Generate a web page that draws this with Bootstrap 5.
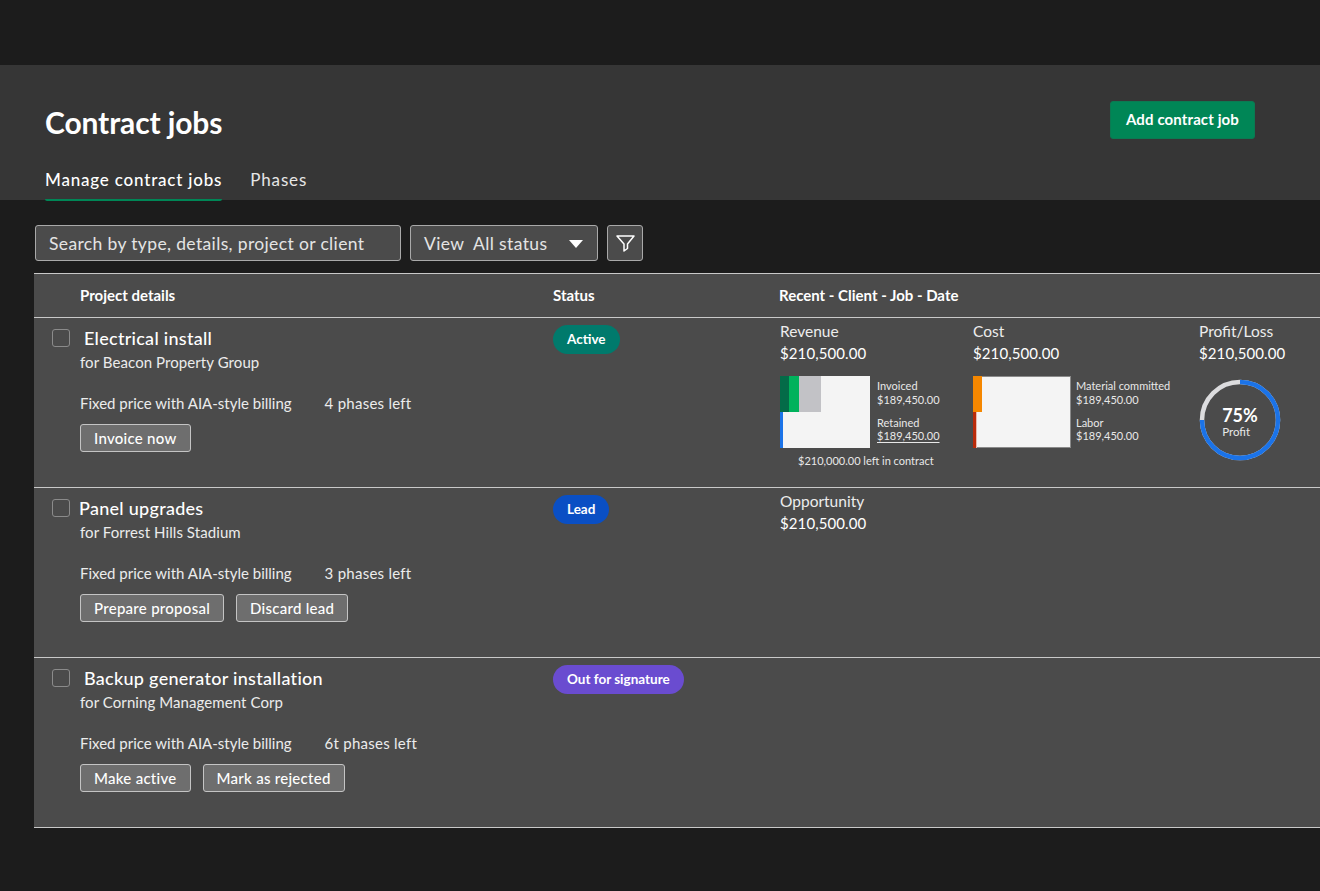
<!DOCTYPE html>
<html lang="en">
<head>
<meta charset="utf-8">
<title>Contract jobs</title>
<link href="https://cdn.jsdelivr.net/npm/bootstrap@5.3.0/dist/css/bootstrap.min.css" rel="stylesheet">
<style>
html,body{height:100%}
body{background:#1c1c1c;color:#fff;font-family:Lato,"Liberation Sans",sans-serif;overflow:hidden;font-size:15px}
.topgap{height:65px}
.pagehead{background:#363636;height:135px;padding:36px 65px 0 45px}
.pagetitle{font-size:30px;font-weight:700;line-height:42px;margin:0;letter-spacing:-.12px}
.addbtn{background:#008656;border:1px solid #0b7a52;color:#fff;font-size:15px;font-weight:700;width:145px;height:38px;padding:0 0 2px;border-radius:3px;letter-spacing:.12px}
.tabbar{margin-top:25px;gap:28px;font-size:17px;line-height:24px}
.tabitem{height:33px;color:#e6e6e6;letter-spacing:.85px}
.tabitem.on{color:#fff;font-weight:500;border-bottom:2px solid #008656;border-radius:2px;letter-spacing:.8px}
.toolbar{padding:25px 0 12px 35px;gap:9px;height:73px}
.fieldbox{height:36px;background:#4b4b4b;border:1px solid #a9a9a9;border-radius:3px;color:#e4e4e4;font-size:17.5px;padding:1px 13px 0;line-height:34px;letter-spacing:.36px}
.searchbox{width:366px}
.viewbox{width:188px}
.caretmark{width:0;height:0;border-left:7.5px solid transparent;border-right:7.5px solid transparent;border-top:8px solid #fff;margin-right:1px}
.filterbox{width:36px;padding:0}
.jobtable{margin-left:34px;background:#4b4b4b;border-top:1px solid #c9c9c9}
.headrow{height:44px;border-bottom:1px solid #c9c9c9;font-size:15px;font-weight:700;line-height:43px}
.cellmain{width:519px;flex:none}
.cellstatus{width:226px;flex:none}
.headrow .cellmain{padding-left:46px}
.jobrow{height:170px;border-bottom:1px solid #c9c9c9}
.jobrow .cellmain{padding:10px 0 0 18px}
.tickbox{width:18px;height:18px;border:1.5px solid #8b8b8b;border-radius:3px;flex:none;margin-right:14px}
.tickbox.narrow{margin-right:9px}
.jobname{font-size:18px;font-weight:500;line-height:20px;letter-spacing:.28px}
.jobinfo{padding-left:28px;color:#ececec}
.clientline{line-height:20px;margin-top:4px;letter-spacing:.08px}
.termline{line-height:20px;margin-top:20.5px;gap:33px}
.termline span+span{letter-spacing:.25px}
.actions{margin-top:11.5px;gap:12px}
.rowbtn{background:#6e6e6e;border:1px solid #c4c4c4;border-radius:3px;color:#fff;font-size:15px;font-weight:500;height:28px;line-height:26px;padding:0 13px;letter-spacing:.27px}
.statuspill{display:inline-block;margin-top:7px;height:29px;line-height:28px;padding:0 14px;border-radius:15px;font-size:13.5px;font-weight:700;color:#fff}
.pillactive{background:#007a6c}
.pilllead{background:#0a4fc4}
.pillsign{background:#6a4cd0}
.recentcell{padding:3px 0 0 1px}
.metriccol{flex:none}
.metricrev{width:193px}
.metriccost{width:226px}
.metrichead{line-height:20px;color:#ededed;font-size:15.5px}
.metricval{line-height:22px;margin-top:1px;font-size:15px;letter-spacing:.1px}
.chartline{margin-top:12px}
.stackbox{width:90px;height:72px;background:#f4f4f4;flex:none}
.stackbox.boxed{width:98px;box-shadow:inset 0 0 0 1px #8a8a8a}
.stackhalf{height:36px}
.stackhalf span{display:block;height:100%}
.seg-dark{background:#046b48;width:9px}
.seg-green{background:#00b25c;width:10px}
.seg-gray{background:#c2c2c6;width:22px}
.seg-blue{background:#1b73e8;width:3px}
.seg-orange{background:#f58700;width:9px}
.seg-red{background:#b92b0a;width:3px;box-shadow:1px 0 0 #eab9ad}
.legendcol{padding:3px 0 0 7px;font-size:11px;line-height:13.5px;color:#e8e8e8}
.stackbox.boxed+.legendcol{padding-left:5px}
.legendcol div+div{margin-top:9.5px}
.legendcol u{text-underline-offset:2px}
.leftnote{font-size:11px;line-height:13px;margin:6px 0 0 18px;color:#e8e8e8}
.ringbox{width:82px;height:82px;margin:15px 0 0 0}
.ringtext{inset:0;padding-top:3px}
.ringpct{font-size:18px;font-weight:700;line-height:20px}
.ringlab{font-size:11.5px;line-height:13px;color:#e8e8e8}
</style>
</head>
<body>
<div class="topgap"></div>
<header class="pagehead">
  <div class="d-flex justify-content-between align-items-start">
    <h1 class="pagetitle">Contract jobs</h1>
    <button class="btn addbtn" type="button">Add contract job</button>
  </div>
  <div class="d-flex tabbar">
    <div class="tabitem on">Manage contract jobs</div>
    <div class="tabitem">Phases</div>
  </div>
</header>
<div class="d-flex toolbar">
  <div class="fieldbox searchbox">Search by type, details, project or client</div>
  <div class="fieldbox viewbox d-flex align-items-center justify-content-between"><span>View&nbsp; All status</span><span class="caretmark"></span></div>
  <div class="fieldbox filterbox d-flex align-items-center justify-content-center">
    <svg width="19" height="17" viewBox="0 0 19 17" fill="none" stroke="#fff" stroke-width="1.5" stroke-linejoin="round"><path d="M1 1h17l-6.5 8v4.5L8 16V9z"/></svg>
  </div>
</div>
<section class="jobtable">
  <div class="d-flex headrow">
    <div class="cellmain">Project details</div>
    <div class="cellstatus">Status</div>
    <div class="flex-grow-1">Recent - Client - Job - Date</div>
  </div>

  <div class="d-flex jobrow">
    <div class="cellmain">
      <div class="d-flex align-items-center"><span class="tickbox"></span><span class="jobname">Electrical install</span></div>
      <div class="jobinfo">
        <div class="clientline">for Beacon Property Group</div>
        <div class="d-flex termline"><span>Fixed price with AIA-style billing</span><span>4 phases left</span></div>
        <div class="d-flex actions"><span class="rowbtn">Invoice now</span></div>
      </div>
    </div>
    <div class="cellstatus"><span class="statuspill pillactive">Active</span></div>
    <div class="flex-grow-1 d-flex recentcell">
      <div class="metriccol metricrev">
        <div class="metrichead">Revenue</div>
        <div class="metricval">$210,500.00</div>
        <div class="d-flex chartline">
          <div class="stackbox">
            <div class="d-flex stackhalf"><span class="seg-dark"></span><span class="seg-green"></span><span class="seg-gray"></span></div>
            <div class="d-flex stackhalf"><span class="seg-blue"></span></div>
          </div>
          <div class="legendcol"><div>Invoiced<br>$189,450.00</div><div>Retained<br><u>$189,450.00</u></div></div>
        </div>
        <div class="leftnote">$210,000.00 left in contract</div>
      </div>
      <div class="metriccol metriccost">
        <div class="metrichead">Cost</div>
        <div class="metricval">$210,500.00</div>
        <div class="d-flex chartline">
          <div class="stackbox boxed">
            <div class="d-flex stackhalf"><span class="seg-orange"></span></div>
            <div class="d-flex stackhalf"><span class="seg-red"></span></div>
          </div>
          <div class="legendcol"><div>Material committed<br>$189,450.00</div><div>Labor<br>$189,450.00</div></div>
        </div>
      </div>
      <div class="metriccol">
        <div class="metrichead">Profit/Loss</div>
        <div class="metricval">$210,500.00</div>
        <div class="position-relative ringbox">
          <svg width="82" height="82" viewBox="0 0 82 82" fill="none">
            <circle cx="41" cy="41" r="38" stroke="#dcdcde" stroke-width="4.5"/>
            <circle cx="41" cy="41" r="38" stroke="#1b73e8" stroke-width="4.5" pathLength="100" stroke-dasharray="75 25" transform="rotate(-90 41 41)"/>
          </svg>
          <div class="position-absolute ringtext d-flex align-items-center justify-content-center">
            <div class="d-flex flex-column align-items-start"><span class="ringpct">75%</span><span class="ringlab">Profit</span></div>
          </div>
        </div>
      </div>
    </div>
  </div>

  <div class="d-flex jobrow">
    <div class="cellmain">
      <div class="d-flex align-items-center"><span class="tickbox narrow"></span><span class="jobname">Panel upgrades</span></div>
      <div class="jobinfo">
        <div class="clientline">for Forrest Hills Stadium</div>
        <div class="d-flex termline"><span>Fixed price with AIA-style billing</span><span>3 phases left</span></div>
        <div class="d-flex actions"><span class="rowbtn">Prepare proposal</span><span class="rowbtn">Discard lead</span></div>
      </div>
    </div>
    <div class="cellstatus"><span class="statuspill pilllead">Lead</span></div>
    <div class="flex-grow-1 recentcell">
      <div class="metrichead">Opportunity</div>
      <div class="metricval">$210,500.00</div>
    </div>
  </div>

  <div class="d-flex jobrow">
    <div class="cellmain">
      <div class="d-flex align-items-center"><span class="tickbox"></span><span class="jobname">Backup generator installation</span></div>
      <div class="jobinfo">
        <div class="clientline">for Corning Management Corp</div>
        <div class="d-flex termline"><span>Fixed price with AIA-style billing</span><span>6t phases left</span></div>
        <div class="d-flex actions"><span class="rowbtn">Make active</span><span class="rowbtn">Mark as rejected</span></div>
      </div>
    </div>
    <div class="cellstatus"><span class="statuspill pillsign">Out for signature</span></div>
    <div class="flex-grow-1"></div>
  </div>
</section>
<script src="https://cdn.jsdelivr.net/npm/bootstrap@5.3.0/dist/js/bootstrap.bundle.min.js"></script>
</body>
</html>
